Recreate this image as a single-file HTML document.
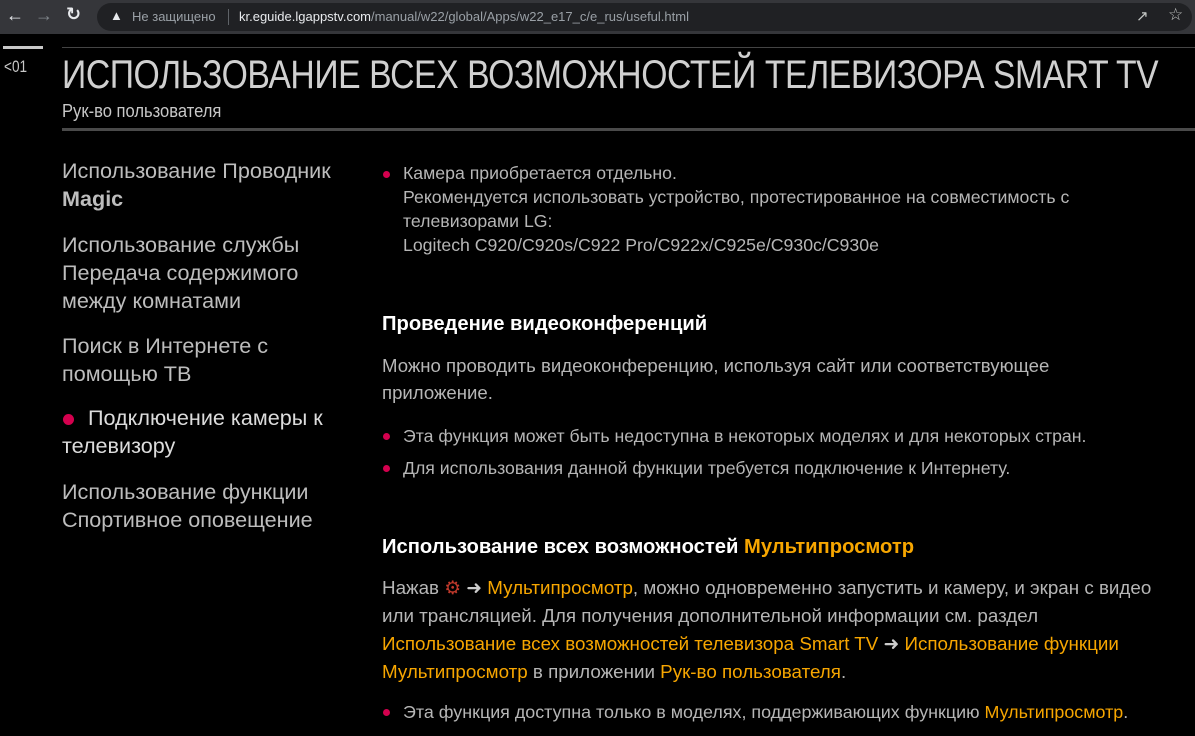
<!DOCTYPE html>
<html><head><meta charset="utf-8">
<style>
*{margin:0;padding:0;box-sizing:border-box}
body{width:1195px;height:736px;background:#000;overflow:hidden;position:relative;font-family:"Liberation Sans","DejaVu Sans",sans-serif;color:#b9b9b9}
.bar{position:absolute;left:0;top:0;width:1195px;height:34px;background:#35363a}
.omni{position:absolute;left:97px;top:3px;width:1095px;height:28px;border-radius:14px;background:#202124}
.t{position:absolute;white-space:nowrap}
.nav{font-size:21.6px;color:#bdbdbd;line-height:28px}
.p{font-size:18.6px;line-height:27px;color:#b6b6b6}
.h{font-size:20.2px;color:#fff;font-weight:bold}
.y{color:#f7a600}
.dot{display:inline-block;width:8px;height:8px;border-radius:50%;background:#d4004e;position:absolute}
</style></head><body>
<div class="bar"></div>
<div class="omni"></div>
<div class="t" style="left:6px;top:5px;color:#e8eaed;font-size:18px">&#8592;</div>
<div class="t" style="left:35px;top:5px;color:#80868b;font-size:18px">&#8594;</div>
<div class="t" style="left:66px;top:4px;color:#e8eaed;font-size:18px;font-weight:bold">&#8635;</div>
<div class="t" style="left:110px;top:8px;color:#e8eaed;font-size:13px">&#9650;</div>
<div class="t" style="left:132px;top:9px;color:#9aa0a6;font-size:13px">Не защищено</div>
<div style="position:absolute;left:228px;top:9px;width:1px;height:16px;background:#5f6368"></div>
<div class="t" style="left:239px;top:9px;color:#9aa0a6;font-size:13px"><span style="color:#e8eaed">kr.eguide.lgappstv.com</span>/manual/w22/global/Apps/w22_e17_c/e_rus/useful.html</div>
<div class="t" style="left:1136px;top:7px;color:#c4c7c5;font-size:15px">&#8599;</div>
<div class="t" style="left:1168px;top:5px;color:#c4c7c5;font-size:17px">&#9734;</div>

<div style="position:absolute;left:3px;top:46px;width:40px;height:3px;background:#c8c8c8"></div>
<div style="position:absolute;left:62px;top:47px;width:1133px;height:1px;background:#444"></div>
<div class="t" style="left:4px;top:57px;font-size:17px;color:#c8c8c8;transform:scaleX(.8);transform-origin:left">&lt;01</div>
<div class="t" style="left:62px;top:53px;font-size:40px;color:#d0d0d0;transform:scaleX(.843);transform-origin:left;letter-spacing:-0.5px">ИСПОЛЬЗОВАНИЕ ВСЕХ ВОЗМОЖНОСТЕЙ ТЕЛЕВИЗОРА SMART TV</div>
<div class="t" style="left:62px;top:101px;font-size:18px;color:#c8c8c8;transform:scaleX(.92);transform-origin:left">Рук-во пользователя</div>
<div style="position:absolute;left:62px;top:128px;width:1133px;height:3px;background:#4a4a4a"></div>

<div class="t nav" style="left:62px;top:157px">Использование Проводник<br><b>Magic</b></div>
<div class="t nav" style="left:62px;top:231px">Использование службы<br>Передача содержимого<br>между комнатами</div>
<div class="t nav" style="left:62px;top:332px">Поиск в Интернете с<br>помощью ТВ</div>
<span class="dot" style="left:63px;top:414px;width:11px;height:11px"></span>
<div class="t nav" style="left:88px;top:404px;color:#dcdcdc">Подключение камеры к</div>
<div class="t nav" style="left:62px;top:432px;color:#dcdcdc">телевизору</div>
<div class="t nav" style="left:62px;top:478px">Использование функции<br>Спортивное оповещение</div>

<span class="dot" style="left:383px;top:171px;width:7px;height:7px"></span>
<div class="t p" style="left:403px;top:161px;line-height:24px;font-size:17.7px">Камера приобретается отдельно.<br>Рекомендуется использовать устройство, протестированное на совместимость с<br>телевизорами LG:<br>Logitech C920/C920s/C922 Pro/C922x/C925e/C930c/C930e</div>

<div class="t h" style="left:382px;top:313px">Проведение видеоконференций</div>
<div class="t p" style="left:382px;top:352px">Можно проводить видеоконференцию, используя сайт или соответствующее<br>приложение.</div>
<span class="dot" style="left:383px;top:433px;width:7px;height:7px"></span>
<div class="t p" style="left:403px;top:423px;font-size:17.7px">Эта функция может быть недоступна в некоторых моделях и для некоторых стран.</div>
<span class="dot" style="left:383px;top:465px;width:7px;height:7px"></span>
<div class="t p" style="left:403px;top:455px;font-size:17.7px">Для использования данной функции требуется подключение к Интернету.</div>

<div class="t h" style="left:382px;top:536px">Использование всех возможностей <span class="y">Мультипросмотр</span></div>
<div class="t p" style="left:382px;top:574px;line-height:28px;font-size:18.8px">Нажав <span style="color:#c0392b">&#9881;</span> <span style="color:#ccc">&#10140;</span> <span class="y">Мультипросмотр</span>, можно одновременно запустить и камеру, и экран с видео<br>или трансляцией. Для получения дополнительной информации см. раздел<br><span class="y">Использование всех возможностей телевизора Smart TV</span> <span style="color:#ccc">&#10140;</span> <span class="y">Использование функции</span><br><span class="y">Мультипросмотр</span> в приложении <span class="y">Рук-во пользователя</span>.</div>
<span class="dot" style="left:383px;top:709px;width:7px;height:7px"></span>
<div class="t p" style="left:403px;top:699px;font-size:17.9px">Эта функция доступна только в моделях, поддерживающих функцию <span class="y">Мультипросмотр</span>.</div>
</body></html>
